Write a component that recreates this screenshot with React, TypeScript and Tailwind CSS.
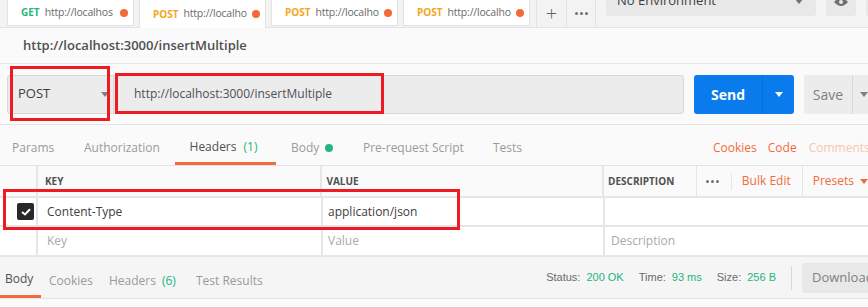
import React from "react";

const F = { fontFamily: '"Open Sans", "Liberation Sans", sans-serif' };

function Tab({ method, color, text, active }: { method: string; color: string; text: string; active?: boolean }) {
  return (
    <div
      className={`shrink-0 flex items-center w-[127px] border-x border-[#e3e3e3] bg-white pl-[13px] pr-[5px] ${active ? "h-[28px]" : "h-[26px] border-b"}`}
    >
      <span className="text-[10px] font-bold" style={{ color }}>{method}</span>
      <span className="ml-[5px] text-[10.5px] tracking-[-0.2px] text-[#6a6a6a] whitespace-nowrap">{text}</span>
      <span className="ml-auto w-[8px] h-[8px] rounded-full bg-[#f26b3a]" />
    </div>
  );
}

function Dots() {
  return (
    <span className="flex gap-[2px]">
      <span className="w-[3px] h-[3px] rounded-full bg-[#707070]" />
      <span className="w-[3px] h-[3px] rounded-full bg-[#707070]" />
      <span className="w-[3px] h-[3px] rounded-full bg-[#707070]" />
    </span>
  );
}

function Caret({ color, className = "" }: { color: string; className?: string }) {
  return (
    <span
      className={`inline-block shrink-0 w-0 h-0 border-x-[4px] border-x-transparent border-t-[5px] ${className}`}
      style={{ borderTopColor: color }}
    />
  );
}

export default function App() {
  return (
    <div className="relative w-[868px] h-[307px] overflow-hidden bg-[#fafafa]" style={F}>
      {/* tab bar */}
      <div className="h-[28px] bg-[#f3f3f3] border-b border-[#e3e3e3] flex items-start pl-[7px] gap-[5px] overflow-visible">
        <Tab method="GET" color="#26b47f" text="http://localhos" />
        <Tab method="POST" color="#f4a51c" text="http://localho" active />
        <Tab method="POST" color="#f4a51c" text="http://localho" />
        <Tab method="POST" color="#f4a51c" text="http://localho" />
        <div className="shrink-0 flex h-[27px] border-l border-[#e3e3e3] ml-[1px]">
          <div className="w-[30px] flex items-center justify-center border-r border-[#e3e3e3] text-[#606060] text-[20px] font-light">
            +
          </div>
          <div className="w-[29px] flex items-center justify-center border-r border-[#e3e3e3]">
            <Dots />
          </div>
        </div>
        <div className="shrink-0 ml-[5px] -mt-[14px] w-[210px] h-[30px] rounded-[3px] bg-[#e8e8e8] flex items-center justify-between pl-[11px] pr-[13px]">
          <span className="text-[13px] text-[#404040]">No Environment</span>
          <Caret color="#707070" />
        </div>
        <div className="shrink-0 ml-[5px] -mt-[14px] w-[30px] h-[30px] rounded-[3px] bg-[#e8e8e8] flex items-end justify-center pb-[10px]">
          <svg width="14" height="8" viewBox="0 0 14 8">
            <path d="M0 4 Q7 -4 14 4 Q7 12 0 4Z" fill="#707070" />
            <circle cx="7" cy="4" r="2" fill="#e8e8e8" />
          </svg>
        </div>
        <div className="shrink-0 ml-[5px] -mt-[14px] w-[30px] h-[30px] rounded-[3px] bg-[#e8e8e8]" />
      </div>

      {/* title */}
      <div className="h-[36px] flex items-center pl-[23px] border-b border-[#e6e6e6]">
        <span className="text-[13px] font-semibold text-[#505050]">http://localhost:3000/insertMultiple</span>
      </div>

      {/* request row */}
      <div className="h-[61px] flex items-center pl-[7px] border-b border-[#e3e3e3] overflow-hidden">
        <div className="shrink-0 flex h-[39px] w-[677px] rounded-[3px] border border-[#d8d8d8] bg-[#ececec]">
          <div className="w-[106px] flex items-center justify-between pl-[10px] pr-[4px] border-r border-[#d8d8d8]">
            <span className="text-[13px] text-[#404040]">POST</span>
            <Caret color="#808080" />
          </div>
          <div className="flex items-center pl-[20px] text-[12px] text-[#505050]">http://localhost:3000/insertMultiple</div>
        </div>
        <div className="shrink-0 ml-[10px] flex h-[39px] w-[100px] rounded-[3px] bg-[#097bed] text-white">
          <div className="w-[69px] flex items-center justify-center text-[14px] font-bold border-r border-[#0a6fd6]">Send</div>
          <div className="flex-1 flex items-center justify-center">
            <Caret color="#ffffff" />
          </div>
        </div>
        <div className="shrink-0 ml-[10px] flex h-[39px] w-[70px] rounded-[3px] bg-[#ececec]">
          <div className="w-[49px] flex items-center justify-center text-[14px] text-[#808080] border-r border-[#d8d8d8]">Save</div>
          <div className="flex-1 flex items-center justify-center">
            <Caret color="#808080" />
          </div>
        </div>
      </div>

      {/* request tabs */}
      <div className="h-[41px] flex items-stretch border-b border-[#e3e3e3] text-[12px] text-[#9a9a9a] whitespace-nowrap">
        <div className="w-[84px] flex items-center pt-[6px] pl-[12px]">Params</div>
        <div className="w-[91px] flex items-center pt-[6px]">Authorization</div>
        <div className="w-[101px] flex flex-col">
          <div className="flex-1 flex items-center justify-center pt-[6px] pr-[4px] text-[#505050]">
            Headers<span className="ml-[7px] text-[#26b47f]">(1)</span>
          </div>
          <div className="h-[3px] bg-[#f26b3a]" />
        </div>
        <div className="w-[87px] flex items-center pt-[6px] pl-[15px]">
          Body<span className="ml-[6px] w-[8px] h-[8px] rounded-full bg-[#26b47f]" />
        </div>
        <div className="w-[130px] flex items-center pt-[6px]">Pre-request Script</div>
        <div className="flex items-center pt-[6px]">Tests</div>
        <div className="ml-auto w-[155px] flex items-center pt-[6px] overflow-hidden">
          <span className="text-[#f26b3a]">Cookies</span>
          <span className="ml-[11px] text-[#f26b3a]">Code</span>
          <span className="ml-[12px] text-[#f9c5b1]">Comments (0)</span>
        </div>
      </div>

      {/* table */}
      <div className="border-b-2 border-[#e6e6e6]">
        <div className="flex h-[32px] border-b-2 border-[#e6e6e6] text-[10px] font-bold text-[#505050]">
          <div className="w-[38px] border-r-2 border-[#e6e6e6]" />
          <div className="w-[285px] border-r-2 border-[#e6e6e6] flex items-center pl-[7px]">KEY</div>
          <div className="w-[282px] border-r-2 border-[#e6e6e6] flex items-center pl-[4px]">VALUE</div>
          <div className="w-[92px] flex items-center pl-[4px]">DESCRIPTION</div>
          <div className="w-[106px] border-l border-[#e6e6e6] flex items-center pl-[9px]">
            <Dots />
            <span className="ml-[12px] h-[17px] border-l border-[#e6e6e6]" />
            <span className="ml-[10px] text-[12px] font-normal text-[#f26b3a]">Bulk Edit</span>
          </div>
          <div className="flex-1 border-l border-[#e6e6e6] flex items-center pl-[10px] text-[12px] font-normal text-[#f26b3a] whitespace-nowrap">
            Presets
            <Caret color="#f26b3a" className="ml-[6px]" />
          </div>
        </div>
        <div className="flex h-[29px] border-b-2 border-[#e6e6e6] bg-white text-[12px] text-[#404040]">
          <div className="w-[38px] border-r-2 border-[#e6e6e6] flex items-center pl-[17px]">
            <div className="w-[17px] h-[17px] rounded-[2px] bg-[#282828] flex items-center justify-center">
              <svg width="10" height="8" viewBox="0 0 10 8">
                <path d="M1 4 L4 6.5 L9 1.2" stroke="white" strokeWidth="2" fill="none" />
              </svg>
            </div>
          </div>
          <div className="w-[285px] border-r-2 border-[#e6e6e6] flex items-center pl-[9px]">Content-Type</div>
          <div className="w-[282px] border-r-2 border-[#e6e6e6] flex items-center pl-[5px]">application/json</div>
          <div className="flex-1" />
        </div>
        <div className="flex h-[28px] bg-white text-[12px] text-[#aaaaaa]">
          <div className="w-[38px] border-r-2 border-[#e6e6e6]" />
          <div className="w-[285px] border-r-2 border-[#e6e6e6] flex items-center pl-[9px]">Key</div>
          <div className="w-[282px] border-r-2 border-[#e6e6e6] flex items-center pl-[5px]">Value</div>
          <div className="flex-1 flex items-center pl-[6px]">Description</div>
        </div>
      </div>

      {/* response bar */}
      <div className="h-[42px] flex items-stretch border-b border-[#e3e3e3] bg-[#f5f5f5] text-[12px] text-[#9a9a9a] whitespace-nowrap">
        <div className="flex flex-col w-[41px]">
          <div className="flex-1 flex items-center pt-[6px] pl-[5px] text-[#505050]">Body</div>
          <div className="h-[3px] bg-[#f26b3a]" />
        </div>
        <div className="w-[68px] flex items-center pt-[6px] pl-[8px]">Cookies</div>
        <div className="w-[87px] flex items-center pt-[6px]">
          Headers<span className="ml-[6px] text-[#26b47f]">(6)</span>
        </div>
        <div className="flex items-center pt-[6px]">Test Results</div>
        <div className="ml-auto flex items-center text-[11px] text-[#6a6a6a]" style={{ fontFamily: '"Liberation Sans", Arial, sans-serif' }}>
          <span>Status:</span>
          <span className="ml-[6px] text-[#26b47f]">200 OK</span>
          <span className="ml-[15px]">Time:</span>
          <span className="ml-[6px] text-[#26b47f]">93 ms</span>
          <span className="ml-[15px]">Size:</span>
          <span className="ml-[6px] text-[#26b47f]">256 B</span>
          <span className="ml-[15px] h-[24px] border-l border-[#d8d8d8]" />
          <div className="ml-[10px] w-[66px] h-[30px] rounded-l-[3px] bg-[#e8e8e8] flex items-center pl-[10px] text-[13px] text-[#808080] overflow-hidden" style={F}>
            Download
          </div>
        </div>
      </div>

      {/* red annotation boxes */}
      <div className="absolute left-[10px] top-[66px] w-[100px] h-[55px] border-[3px] border-[#ed1c24]" />
      <div className="absolute left-[115px] top-[73px] w-[269px] h-[41px] border-[3px] border-[#ed1c24]" />
      <div className="absolute left-[3px] top-[189px] w-[457px] h-[41px] border-[3px] border-[#ed1c24]" />
    </div>
  );
}
